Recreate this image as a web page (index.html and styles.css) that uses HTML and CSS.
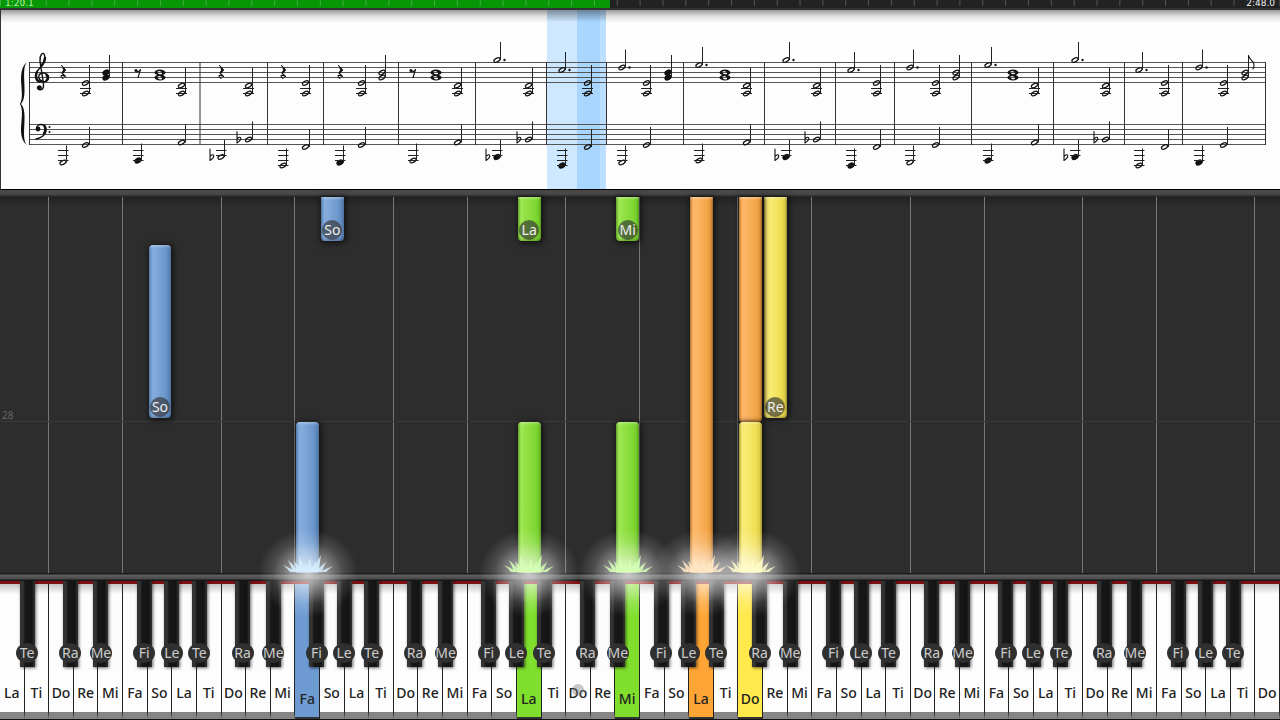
FILE: index.html
```html
<!DOCTYPE html>
<html lang="en">
<head>
  <meta charset="UTF-8">
  <meta name="viewport" content="width=device-width, initial-scale=1.0">
  <title>Piano Roll</title>
  <link rel="stylesheet" href="styles.css">
</head>
<body>
  <header class="timeline">
    <progress class="timeline-bar" value="80.1" max="168" aria-label="Song position"></progress>
    <div class="timeline-ticks"></div>
    <span class="time elapsed">1:20.1</span>
    <span class="time total">2:48.0</span>
  </header>

  <section class="score">
    <svg id="score" viewBox="0 0 1280 179" role="img" aria-label="Sheet music"></svg>
  </section>

  <div class="rail rail-top"></div>

  <main class="roll" id="roll">
    <span class="measure">28</span>
    <div class="note blue white-13 from-top to-a"><span class="tag">So</span></div>
    <div class="note green white-21 from-top to-a"><span class="tag">La</span></div>
    <div class="note green white-25 from-top to-a"><span class="tag">Mi</span></div>
    <div class="note blue white-6 from-b to-c"><span class="tag">So</span></div>
    <div class="note yellow white-31 from-top to-c"><span class="tag">Re</span></div>
    <div class="note orange white-30 from-top to-d"></div>
    <div class="note orange white-28 from-top to-keys playing"></div>
    <div class="note blue white-12 from-d to-keys playing"></div>
    <div class="note green white-21 from-d to-keys playing"></div>
    <div class="note green white-25 from-d to-keys playing"></div>
    <div class="note yellow white-30 from-d to-keys playing"></div>
  </main>

  <div class="rail rail-bottom"></div>

  <ul class="keyboard" id="keyboard"></ul>

  <script src="script.js"></script>
</body>
</html>
```

FILE: styles.css
```css
* { box-sizing: border-box; }
body {
  margin: 0;
  min-height: 100vh;
  display: flex;
  flex-direction: column;
  overflow: hidden;
  background: #2d2d2d;
  font-family: "Noto Sans", "Open Sans", sans-serif;
}

/* timeline */
.timeline { position: relative; height: 10px; background: #222; border-bottom: 2px solid #333; }
.timeline-bar { display: block; width: 100%; height: 8px; appearance: none; border: 0; background: #222; }
.timeline-bar::-webkit-progress-bar { background: #222; }
.timeline-bar::-webkit-progress-value { background: #069606; }
.timeline-ticks {
  position: absolute;
  inset: 0 0 2px 0;
  background: linear-gradient(to right, rgba(255, 255, 255, 0.22) 1px, transparent 1px) 0 0 / calc(100% / 56) 100%;
}
.time { position: absolute; top: -2px; color: #eee; font: 9px/10px "DejaVu Sans", sans-serif; }
.elapsed { left: 5px; color: #b5f0a5; }
.total { right: 5px; }

/* sheet music */
.score { background: linear-gradient(#999, #ddd 6px, #fdfdfd 13px); }
.score svg { display: block; width: 100%; height: auto; }
.staff { stroke: #555; stroke-width: 1; }
.bar { stroke: #333; stroke-width: 1; }
.stem { stroke: #222; stroke-width: 1; }
.ink { fill: #111; }
.stroke { fill: none; stroke: #111; stroke-linecap: round; stroke-linejoin: round; }
.open { fill: none; stroke: #111; stroke-width: 1.2; }
.current-bar { fill: #cee8ff; }
.current-beat { fill: #a9d6ff; }
.current-edge { fill: #bbdfff; }
.shade { fill: url(#shade); }

.rail { flex: none; height: 8px; }
.rail-top { border-top: 1px solid #000; background: linear-gradient(#484848 60%, #222); }
.rail-bottom { background: linear-gradient(#1c1c1c 1px, #606060 2px, #484848 6px, #1c1c1c 7px, #151515); }

/* falling notes, one column per white key */
.roll {
  flex: 1;
  display: grid;
  grid-template-columns: repeat(52, minmax(0, 1fr));
  grid-template-rows: 44fr 4fr 173fr 4fr 151fr;
  background: linear-gradient(#222, #2d2d2d 10px);
}
.guide { grid-row: 1 / -1; margin-left: -1px; border-left: 1px solid #777; }
.measure {
  grid-column: 1 / -1;
  grid-row: 3 / 5;
  display: flex;
  align-items: flex-end;
  padding-left: 2px;
  border-bottom: 1px solid #3a3a3a;
  color: #666;
  font-size: 10px;
  line-height: 12px;
}
.note {
  position: relative;
  display: flex;
  align-items: flex-end;
  justify-content: center;
  min-height: 0;
  margin: 0 1px;
  border-radius: 4px;
  box-shadow: 1px 1px 5px 2px rgba(0, 0, 0, 0.5), inset 0 -2px 2px rgba(0, 0, 0, 0.2), inset 0 2px 2px rgba(255, 255, 255, 0.25);
}
.note.from-top { border-top-left-radius: 0; border-top-right-radius: 0; }
.note.playing { border-bottom-left-radius: 0; border-bottom-right-radius: 0; }
.blue { background: linear-gradient(to right, #4d76a8, #83acde 3px, #82aadb 30%, #6b97cc 75%, #5b86bb 90%, #456b9c); }
.green { background: linear-gradient(to right, #5fa51f, #a0ea55 3px, #95e148 30%, #80d833 75%, #72ca26 90%, #559d1a); }
.orange { background: linear-gradient(to right, #b87428, #ffb765 3px, #fab565 30%, #f4a648 75%, #e2943a 90%, #a0651f); }
.yellow { background: linear-gradient(to right, #b5a330, #f8ec76 3px, #f7eb72 30%, #efdd52 75%, #dccb45 90%, #a3932a); }

.from-top { grid-row-start: 1; }
.from-b { grid-row-start: 3; }
.from-d { grid-row-start: 5; }
.to-a { grid-row-end: 2; }
.to-c { grid-row-end: 4; }
.to-d { grid-row-end: 5; }
.to-keys { grid-row-end: 6; }
.white-6 { grid-column: 7; }
.white-12 { grid-column: 13; }
.white-13 { grid-column: 14; }
.white-21 { grid-column: 22; }
.white-25 { grid-column: 26; }
.white-28 { grid-column: 29; }
.white-30 { grid-column: 31; }
.white-31 { grid-column: 32; }

.tag {
  width: 20px;
  height: 20px;
  margin-bottom: 1px;
  border-radius: 50%;
  background: rgba(50, 50, 50, 0.65);
  color: #eee;
  display: flex;
  justify-content: center;
  font-size: 14px;
  line-height: 20px;
}

/* flash where a note hits the keys */
.flash {
  position: absolute;
  left: 50%;
  bottom: -48px;
  z-index: 5;
  width: 110px;
  height: 90px;
  margin-left: -55px;
  pointer-events: none;
  overflow: visible;
}

/* keyboard */
.keyboard {
  flex: none;
  display: grid;
  grid-template-columns: repeat(52, minmax(0, 1fr));
  height: 139px;
  margin: 0;
  padding: 0;
  list-style: none;
  border-bottom: 1px solid #111;
  background: #222;
}
.key { position: relative; display: flex; border-top: 3px solid #7d0f12; }
.white {
  flex: 1;
  display: flex;
  align-items: flex-end;
  justify-content: center;
  min-width: 0;
  padding: 0 0 9px;
  border: 0;
  border-right: 1px solid #222;
  border-bottom: 7px solid #858585;
  background: linear-gradient(#c4c4c4, #fdfdfd 10px);
  color: #222;
  font: 500 14px/20px "Noto Sans", "Open Sans", sans-serif;
}
.white.down { padding-bottom: 8px; border-bottom: 2px solid #333; }
.white.down.blue { background: #6d9bd2; }
.white.down.green { background: #80df2d; }
.white.down.orange { background: #ffa535; }
.white.down.yellow { background: #ffe94b; }
.black {
  position: absolute;
  top: -3px;
  left: 100%;
  z-index: 2;
  display: flex;
  align-items: flex-end;
  justify-content: center;
  width: 15px;
  height: 86px;
  margin-left: -8px;
  padding: 0 0 4px;
  border: 0;
  background: linear-gradient(to right, #333 3px, #171717 5px, #141414 12px, #2d2d2d 14px);
  box-shadow: 1px 1px 3px rgba(0, 0, 0, 0.6);
  color: #ccc;
  font: 14px/20px "Noto Sans", "Open Sans", sans-serif;
}
.black.ra, .black.fi { margin-left: -11px; }
.black.me, .black.te { margin-left: -5px; }
.black span {
  flex: none;
  display: flex;
  justify-content: center;
  width: 22px;
  height: 20px;
  border-radius: 50%;
  background: #303030;
}
.cursor {
  position: absolute;
  left: 6px;
  top: 100px;
  width: 12px;
  height: 12px;
  border-radius: 50%;
  background: rgba(120, 120, 120, 0.4);
}
```

FILE: script.js
```js
// ---- keyboard: 52 white keys from A0 to C8 ----
const names = ['La', 'Ti', 'Do', 'Re', 'Mi', 'Fa', 'So'];
const sharps = { La: 'Te', Do: 'Ra', Re: 'Me', Fa: 'Fi', So: 'Le' };
const pressed = { 12: 'blue', 21: 'green', 25: 'green', 28: 'orange', 30: 'yellow' };
const keyboard = document.getElementById('keyboard');
const roll = document.getElementById('roll');

let keys = '';
let guides = '';
for (let i = 0; i < 52; i++) {
  const name = names[i % 7];
  const down = pressed[i] ? ` down ${pressed[i]}` : '';
  keys += `<li class="key"><button class="white${down}">${name}</button>`;
  if (sharps[name] && i < 51) {
    const s = sharps[name];
    keys += `<button class="black ${s.toLowerCase()}"><span>${s}</span></button>`;
  }
  if (i === 23) keys += '<div class="cursor"></div>';
  keys += '</li>';
  if (name === 'Do' || name === 'Fa') {
    guides += `<div class="guide" style="grid-column: ${i + 1}"></div>`;
  }
}
keyboard.innerHTML = keys;
roll.insertAdjacentHTML('afterbegin', guides);

// ---- flashes under the playing notes ----
const tints = { blue: '#d5efff', green: '#d4ffb4', orange: '#ffe5c0', yellow: '#fffbc8' };
const rays = [[-25, 7], [-20, 12], [-14, 11], [-9, 16], [-3, 9], [2, 14], [8, 11], [13, 17], [18, 10], [25, 6]];
document.querySelectorAll('.playing').forEach((note, n) => {
  const tint = tints[Object.keys(tints).find(c => note.classList.contains(c))];
  let spikes = '';
  rays.forEach(([dx, h]) => {
    const base = 55 + dx * 0.6;
    const mid = 55 + dx * 0.75;
    spikes += `<path d="M${base - 3} 41 Q${mid - 2} ${41 - h / 2} ${55 + dx} ${41 - h} Q${mid + 2} ${41 - h / 2} ${base + 3} 41Z"/>`;
  });
  note.insertAdjacentHTML('beforeend', `<svg class="flash" viewBox="0 0 110 90" aria-hidden="true">
    <defs><radialGradient id="glow${n}">
      <stop offset="0" stop-color="#fff" stop-opacity=".75"/>
      <stop offset=".35" stop-color="#fff" stop-opacity=".48"/>
      <stop offset=".7" stop-color="#fff" stop-opacity=".15"/>
      <stop offset="1" stop-color="#fff" stop-opacity="0"/>
    </radialGradient></defs>
    <ellipse cx="55" cy="42" rx="50" ry="44" fill="url(#glow${n})"/>
    <g fill="${tint}" fill-opacity=".85">${spikes}</g></svg>`);
});

// ---- sheet music ----
const line = (cls, x1, y1, x2, y2) => `<line class="${cls}" x1="${x1}" y1="${y1}" x2="${x2}" y2="${y2}"/>`;

function head(x, y, filled) {
  const turn = `transform="rotate(-26 ${x} ${y})"`;
  return filled
    ? `<ellipse class="ink" cx="${x}" cy="${y}" rx="3.8" ry="2.8" ${turn}/>`
    : `<ellipse class="open" cx="${x}" cy="${y}" rx="3.3" ry="1.8" ${turn}/>`;
}
function flat(x, y) {
  return `<path class="stroke" stroke-width="1.1" d="M${x - 2} ${y - 8}V${y + 3.5}Q${x + 3} ${y} ${x + 1.5} ${y - 2}Q${x} ${y - 3} ${x - 2} ${y - 0.5}"/>`;
}
function rest4(x) {
  return `<path class="stroke" stroke-width="1.1" d="M${x - 1.5} 55.5L${x + 2.5} 60L${x - 1} 63L${x + 2.5} 66.5Q${x - 2} 64.5 ${x - 2} 66Q${x - 2} 67 ${x} 68.5"/>`
    + `<path class="stroke" stroke-width="2" d="M${x + 0.5} 58.5L${x + 1.5} 60L${x} 62"/>`;
}
function rest8(x) {
  return `<circle class="ink" cx="${x - 2}" cy="60.5" r="1.6"/><path class="stroke" stroke-width="1.1" d="M${x - 2} 62Q${x + 1} 62 ${x + 2.5} 59.5L${x} 67.5"/>`;
}
function chord(x, high) {
  const y = high ? 73 : 75.5;
  return head(x - 0.5, y) + head(x - 0.5, 83.5) + line('stem', x + 3.5, y - 18, x + 3.5, 83)
    + line('stem', x - 6, 78.5, x + 5, 78.5) + line('stem', x - 6, 83.5, x + 5, 83.5);
}
function dyad(x, filled) {
  return head(x, 62.5, filled) + head(x, 67.5, filled) + line('stem', x + 3.5, 45, x + 3.5, 67);
}
// whole notes: a thick outer oval with a narrow slanted hole
function wholes(x) {
  return [62.5, 67.5].map(y => `<path class="ink" fill-rule="evenodd" d="M${x - 5.5} ${y}a5.5 3 0 1 0 11 0a5.5 3 0 1 0 -11 0ZM${x - 2.5} ${y - 1}Q${x} ${y - 2.5} ${x + 2} ${y}Q${x + 2.5} ${y + 2} ${x} ${y + 2}Q${x - 3} ${y + 1} ${x - 2.5} ${y - 1}Z"/>`).join('');
}
function melody(x, y) {
  return head(x, y) + line('stem', x + 3.5, y - 18, x + 3.5, y) + `<circle class="ink" cx="${x + 7.5}" cy="${y}" r="1.2"/>`;
}
function low(x, y, filled) {
  let out = head(x, y, filled) + line('stem', x + 3.5, y - 17, x + 3.5, y);
  for (let ly = 140.5; ly <= y + 1; ly += 5) out += line('stem', x - 5, ly, x + 5.5, ly);
  return out;
}

// x positions: low bass note, upper note and chord; tune is the treble pitch
const G = { low: 152.5, up: 135, high: true, tune: 57.5 };
const A = { low: 150.5, up: 132.5, high: false, tune: 55 };
const B = { low: 147, up: 129.5, high: false, flat: true, tune: 50 };
const F = { low: 155.5, up: 137, high: true, tune: 60 };
const bars = [
  { ...G, end: 122.5, x: 63, x2: 86, rest: 4, dyad: 106, dyadFilled: true },
  { ...A, end: 200, x: 138, x2: 182, rest: 8, whole: 160, filled: true },
  { ...B, end: 267.5, x: 221, x2: 249, rest: 4 },
  { ...F, end: 323.5, x: 283, x2: 306, rest: 4 },
  { ...G, end: 398.5, x: 340, x2: 362, rest: 4, dyad: 382, filled: true },
  { ...A, end: 475.5, x: 413, x2: 458, rest: 8, whole: 436 },
  { ...B, end: 546.5, x: 497, x2: 529, filled: true },
  { ...F, end: 606.5, x: 562, x2: 588, filled: true },
  { ...G, end: 683.5, x: 622, x2: 647, dyad: 668, dyadFilled: true },
  { ...A, end: 764.5, x: 699, x2: 747, whole: 725 },
  { ...B, end: 835.5, x: 786, x2: 817, filled: true },
  { ...F, end: 894.5, x: 851, x2: 877, filled: true },
  { ...G, end: 971.5, x: 910, x2: 936, dyad: 956 },
  { ...A, end: 1053.5, x: 988, x2: 1035, whole: 1013, filled: true },
  { ...B, end: 1124.5, x: 1075, x2: 1106, filled: true },
  { ...F, end: 1182.5, x: 1139, x2: 1165 },
  { ...G, end: 1265.5, x: 1199, x2: 1224, dyad: 1245, filled: true }
];

let music = '<defs><linearGradient id="shade" x2="0" y2="1"><stop stop-opacity=".4"/><stop offset="1" stop-opacity="0"/></linearGradient></defs>'
  + '<rect class="current-bar" x="547" y="0" width="59" height="179"/>'
  + '<rect class="current-beat" x="577" y="0" width="23" height="179"/>'
  + '<rect class="current-edge" x="600" y="0" width="6" height="179"/>'
  + '<rect class="shade" x="547" y="0" width="59" height="12"/>'
  + line('bar', 0.5, 0, 0.5, 179);
for (let i = 0; i < 5; i++) {
  music += line('staff', 29, 52.5 + i * 5, 1266, 52.5 + i * 5);
  music += line('staff', 29, 114.5 + i * 5, 1266, 114.5 + i * 5);
}
music += line('bar', 29.5, 52, 29.5, 135);

// brace and clefs
music += '<path class="ink" d="M27 52C20 60 29 86 21 94C29 102 20 128 27 135C15 126 26 104 20 94C26 84 15 62 27 52Z"/>'
  + '<path class="stroke" stroke-width="1.4" d="M42 71C37 69 38 63 43 63C50 63 51 71.5 43 72C34 72 34 64 39 59C44 54 46 50 44.5 45C43 41 39.5 45 40 51C41 59 43 68 43.5 75C44 81 37 81 37.500 77"/>'
  + '<path class="stroke" stroke-width="2.4" d="M37 62C35 66 36 70 39 71.5M41 56Q45 52 45 48M46.5 65Q49 68 46.5 70.5"/>'
  + '<circle class="ink" cx="39.5" cy="77.5" r="2.2"/>'
  + '<circle class="ink" cx="38" cy="119" r="2.4"/>'
  + '<path class="stroke" stroke-width="1.4" d="M36.5 118C37 113 46 113 46 120C46 125 41 128 36 129"/>'
  + '<path class="stroke" stroke-width="2.4" d="M44.5 116Q46.500 120 44 123.5"/>'
  + '<circle class="ink" cx="49.5" cy="117" r="1"/><circle class="ink" cx="49.5" cy="122" r="1"/>';

bars.forEach(b => {
  music += line('bar', b.end, 52, b.end, 135);
  music += low(b.x, b.low, b.filled) + chord(b.x2, b.high);
  music += head(b.x2 - 0.5, b.up) + line('stem', b.x2 + 3.5, b.up - 18, b.x2 + 3.5, b.up);
  if (b.flat) music += flat(b.x - 9, b.low) + flat(b.x2 - 10, b.up);
  if (b.rest === 4) music += rest4(b.x);
  else if (b.rest === 8) music += rest8(b.x);
  else music += melody(b.x, b.tune);
  if (b.dyad) music += dyad(b.dyad, b.dyadFilled);
  if (b.whole) music += wholes(b.whole);
});
// flag on the last note
music += '<path class="stroke" stroke-width="1.1" d="M1248.5 46Q1250 49 1253 52Q1255 55 1253 59"/>';
document.getElementById('score').innerHTML = music;
```
